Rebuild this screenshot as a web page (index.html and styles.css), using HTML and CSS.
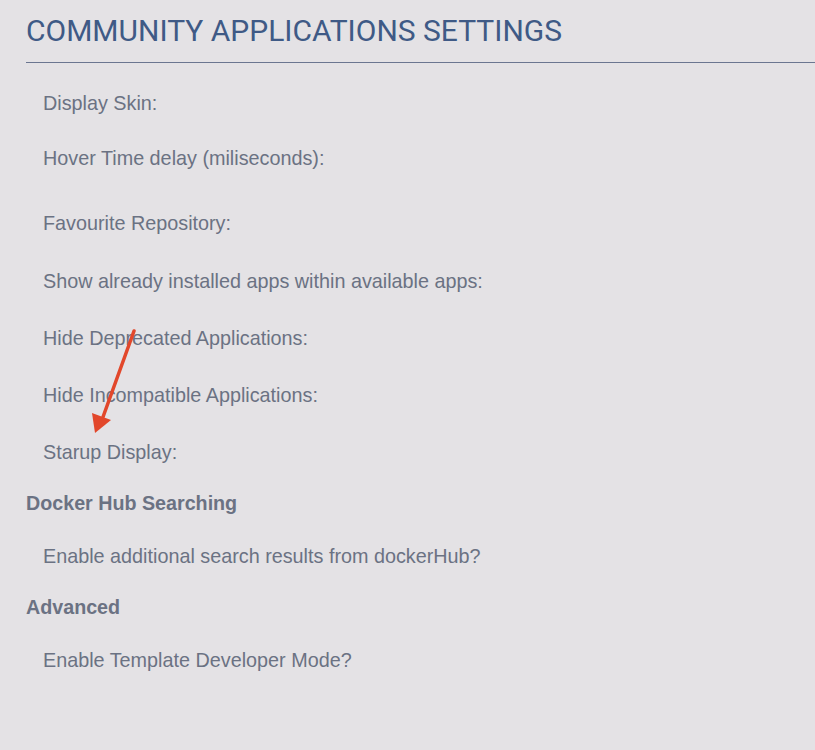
FILE: index.html
```html
<!DOCTYPE html>
<html lang="en">
  <head>
    <meta charset="UTF-8" />
    <title>Community Applications Settings</title>
    <link rel="stylesheet" href="styles.css">
  </head>
  <body>
    <div class="page">
      <h1 class="title">COMMUNITY APPLICATIONS SETTINGS</h1>

      <div class="settings">
        <div class="row row-short">Display Skin:</div>
        <div class="row row-tall">Hover Time delay (miliseconds):</div>
        <div class="row row-mid">Favourite Repository:</div>
        <div class="row">Show already installed apps within available apps:</div>
        <div class="row">Hide Deprecated Applications:</div>
        <div class="row">Hide Incompatible Applications:</div>
        <div class="row row-end">Starup Display:</div>

        <h3 class="section">Docker Hub Searching</h3>
        <div class="row row-end">Enable additional search results from dockerHub?</div>

        <h3 class="section">Advanced</h3>
        <div class="row">Enable Template Developer Mode?</div>
      </div>

      <!-- annotation arrow -->
      <svg class="arrow" width="70" height="120" viewBox="0 0 70 120">
        <line x1="58" y1="2" x2="27" y2="88" stroke="#e2472b" stroke-width="3.5" stroke-linecap="round" />
        <polygon points="19,104 16,84 35,91" fill="#e2472b" />
      </svg>
    </div>
  </body>
</html>
```

FILE: styles.css
```css
body {
  margin: 0;
  background-color: #e4e2e5;
  font-family: "Liberation Sans", Arial, sans-serif;
  color: #6b7283;
}

.page {
  position: relative;
  padding: 0 0 0 26px;
  height: 750px;
  overflow: hidden;
}

.title {
  margin: 0;
  padding: 14px 0 14px;
  font-family: "Roboto", sans-serif;
  font-weight: 400;
  font-size: 30px;
  line-height: 34px;
  color: #3f5a86;
  border-bottom: 1.5px solid #6b7690;
}

.settings {
  padding-top: 29px;
}

.row {
  padding-left: 17px;
  font-size: 19.8px;
  line-height: 22px;
  height: 57px;
}

.row-short {
  height: 55px;
}

.row-tall {
  height: 65px;
}

.row-mid {
  height: 58px;
}

.row-end {
  height: 51px;
}

.section {
  margin: 0;
  font-size: 19.7px;
  font-weight: 700;
  line-height: 22px;
  height: 53px;
}

.arrow {
  position: absolute;
  left: 76px;
  top: 329px;
}
```
